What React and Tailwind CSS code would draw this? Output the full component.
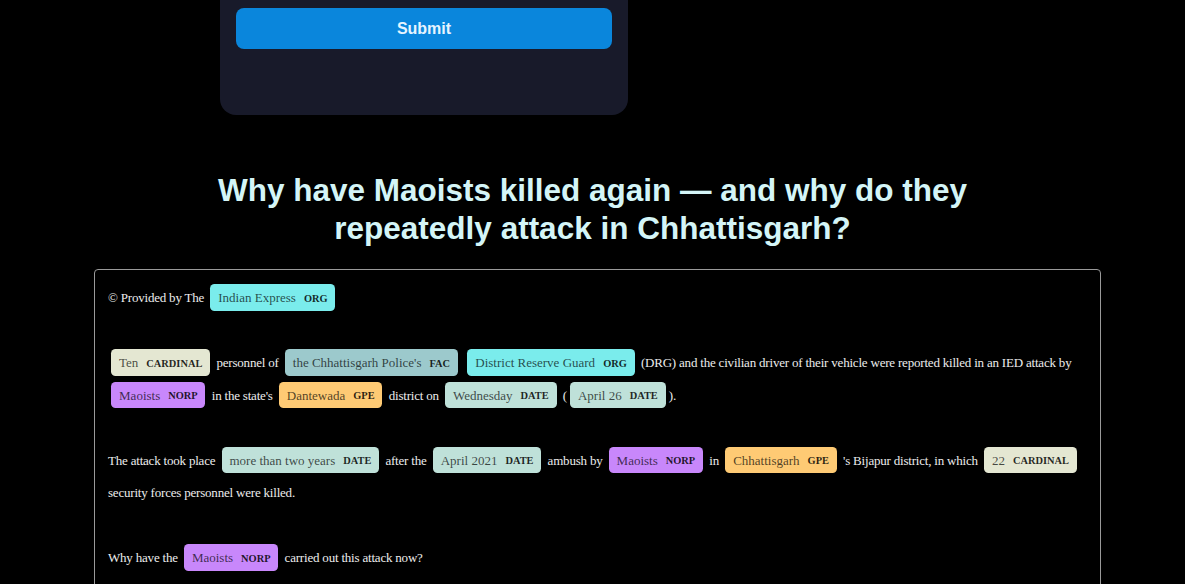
import React from 'react';

const COLORS = {
  ORG: 'bg-[#7aecec]',
  CARDINAL: 'bg-[#e4e7d2]',
  FAC: 'bg-[#9cc9cc]',
  NORP: 'bg-[#c887fb]',
  GPE: 'bg-[#feca74]',
  DATE: 'bg-[#bfe1d9]',
};

function Ent({ text, label }) {
  return (
    <mark
      className={`${COLORS[label]} tracking-normal text-black/70 px-[0.6em] py-[0.45em] mx-[0.25em] leading-none rounded-[0.35em]`}
    >
      {text}
      <span className="text-[0.8em] font-bold leading-none align-middle ml-2 text-black/85 uppercase">
        {label}
      </span>
    </mark>
  );
}

export default function App() {
  return (
    <div className="min-h-[584px] bg-black overflow-hidden">
      {/* form card, scrolled partly out of view */}
      <div className="ml-[220px] w-[408px] -mt-6 pt-8 px-4 pb-[66px] bg-[#181a2a] rounded-2xl">
        <button className="w-full h-[41px] rounded-lg bg-[#0a86dc] text-[#e6f4ff] font-bold text-base font-['Liberation_Sans',Arial,sans-serif]">
          Submit
        </button>
      </div>

      <h1 className="mt-[56px] text-center text-[31.5px] leading-[38px] font-bold text-[#d4f5f7] font-['Liberation_Sans',Arial,sans-serif]">
        Why have Maoists killed again — and why do they
        <br />
        repeatedly attack in Chhattisgarh?
      </h1>

      <div className="mt-[22px] ml-[94px] w-[1007px] border border-[#9a9a9a] rounded px-[13px] pt-[12px] pb-[40px]">
        <div className="text-[13px] leading-[2.5] tracking-[-0.2px] text-[#ececec] font-['Liberation_Serif','Times_New_Roman',serif]">
          © Provided by The <Ent text="Indian Express" label="ORG" />
          <br />
          <br />
          <Ent text="Ten" label="CARDINAL" /> personnel of{' '}
          <Ent text="the Chhattisgarh Police's" label="FAC" />{' '}
          <Ent text="District Reserve Guard" label="ORG" /> (DRG) and the civilian driver of their vehicle
          were reported killed in an IED attack by <Ent text="Maoists" label="NORP" /> in the state's{' '}
          <Ent text="Dantewada" label="GPE" /> district on <Ent text="Wednesday" label="DATE" /> (
          <Ent text="April 26" label="DATE" />
          ).
          <br />
          <br />
          The attack took place <Ent text="more than two years" label="DATE" /> after the{' '}
          <Ent text="April 2021" label="DATE" /> ambush by <Ent text="Maoists" label="NORP" /> in{' '}
          <Ent text="Chhattisgarh" label="GPE" /> 's Bijapur district, in which{' '}
          <Ent text="22" label="CARDINAL" /> security forces personnel were killed.
          <br />
          <br />
          Why have the <Ent text="Maoists" label="NORP" /> carried out this attack now?
        </div>
      </div>
    </div>
  );
}
